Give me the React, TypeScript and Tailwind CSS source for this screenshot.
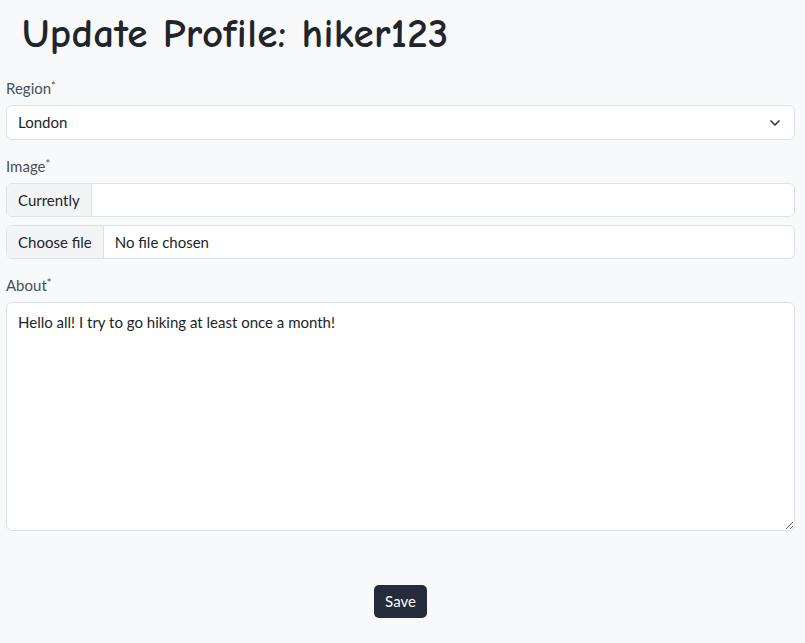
import { ChevronDown } from 'lucide-react';

const Label = ({ text }: { text: string }) => (
  <label className="block text-[15px] leading-[22px] text-[#495057]">
    {text}
    <span className="text-[11px] align-top relative top-[-2px]">*</span>
  </label>
);

const App = () => {
  return (
    <div className="min-h-[643px] w-full bg-[#f8f9fa] font-['Lato','Noto_Sans',sans-serif] text-[#212529]">
      <h1 className="pl-[22px] pt-[10px] text-[41px] leading-[48px] font-['Comic_Neue','Noto_Sans',sans-serif] font-bold tracking-[0.35px] text-[#212529]">
        Update Profile: hiker123
      </h1>

      <form className="px-[6px] pt-[19px] w-[801px]">
        <Label text="Region" />
        <div className="relative mt-[6px]">
          <select className="w-full h-[35px] appearance-none rounded-[6px] border border-[#dee2e6] bg-white pl-[11px] text-[15px] text-[#212529] outline-none">
            <option>London</option>
          </select>
          <ChevronDown size={16} strokeWidth={2.5} className="absolute right-[12px] top-[10px] text-[#343a40] pointer-events-none" />
        </div>

        <div className="mt-[15px]">
          <Label text="Image" />
        </div>
        <div className="mt-[6px] flex h-[34px] rounded-[6px] border border-[#dee2e6] bg-white overflow-hidden">
          <div className="flex items-center px-[11px] bg-[#f3f4f6] border-r border-[#dee2e6] text-[15px]">Currently</div>
          <div className="flex-1" />
        </div>
        <div className="mt-[8px] flex h-[34px] rounded-[6px] border border-[#dee2e6] bg-white overflow-hidden">
          <div className="flex items-center px-[11px] bg-[#f3f4f6] border-r border-[#dee2e6] text-[15px]">Choose file</div>
          <div className="flex items-center pl-[11px] text-[15px]">No file chosen</div>
        </div>

        <div className="mt-[15px]">
          <Label text="About" />
        </div>
        <textarea
          className="mt-[6px] block w-full h-[229px] rounded-[6px] border border-[#dee2e6] bg-white px-[11px] py-[8px] text-[15px] leading-[22px] text-[#212529] outline-none"
          defaultValue="Hello all! I try to go hiking at least once a month!"
        />

        <div className="mt-[54px] flex justify-center">
          <button type="button" className="h-[33px] px-[11px] rounded-[5px] bg-[#252b3b] text-white text-[15px]">
            Save
          </button>
        </div>
      </form>
    </div>
  );
};

export default App;
